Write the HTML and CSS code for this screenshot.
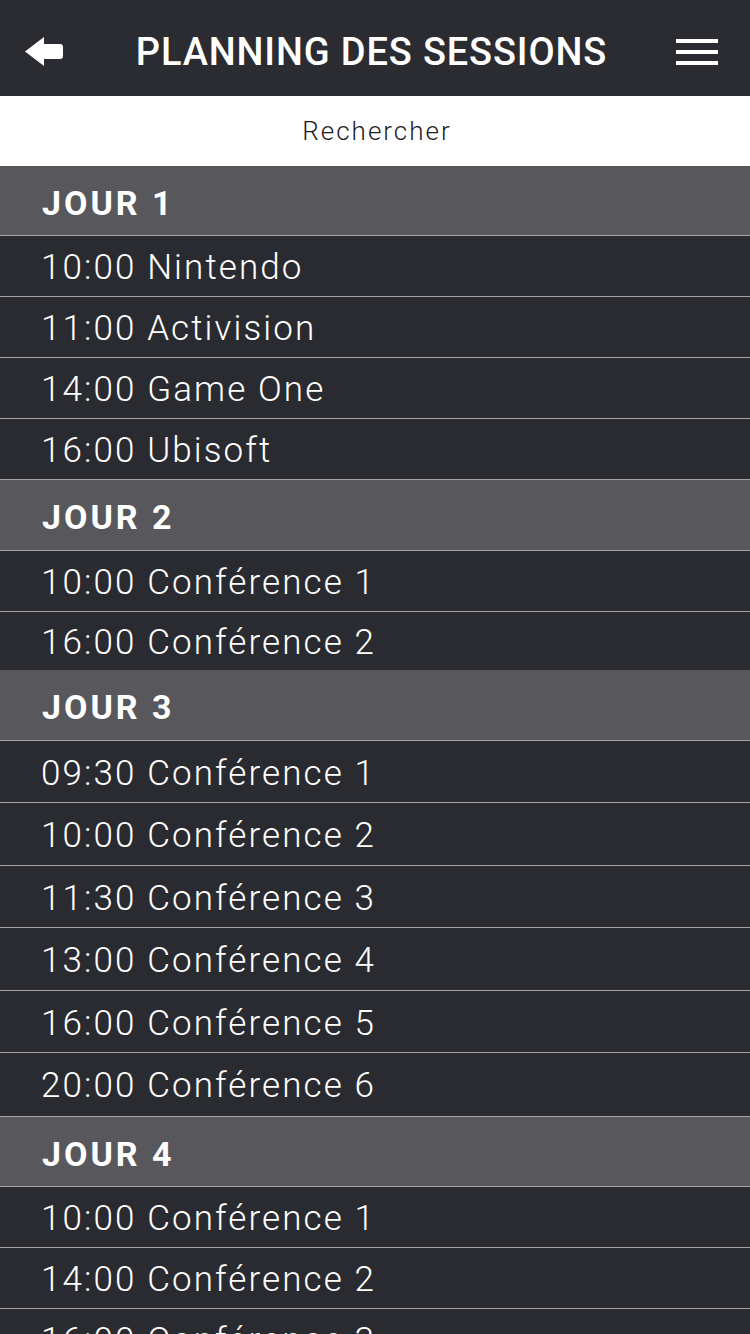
FILE: index.html
```html
<!DOCTYPE html>
<html lang="fr">
<head>
<meta charset="utf-8">
<title>Planning des sessions</title>
<link rel="stylesheet" href="styles.css">
</head>
<body>
<div class="app">
  <header class="topbar">
    <button class="icon-btn back" aria-label="Retour">
      <svg width="38" height="30" viewBox="0 0 38 30"><path d="M0 14.5 L19 0 L19 7 L35 7 Q38 7 38 10 L38 19 Q38 22 35 22 L19 22 L19 29 Z" fill="#fff"/></svg>
    </button>
    <h1 class="title">PLANNING DES SESSIONS</h1>
    <button class="icon-btn menu" aria-label="Menu">
      <span class="bar"></span><span class="bar"></span><span class="bar"></span>
    </button>
  </header>
  <div class="search">Rechercher</div>
  <section class="day day--first">
    <h2 class="day-title">JOUR 1</h2>
    <ul class="rows">
      <li class="row">10:00 Nintendo</li>
      <li class="row">11:00 Activision</li>
      <li class="row">14:00 Game One</li>
      <li class="row">16:00 Ubisoft</li>
    </ul>
  </section>
  <section class="day">
    <h2 class="day-title">JOUR 2</h2>
    <ul class="rows">
      <li class="row">10:00 Conférence 1</li>
      <li class="row row--end">16:00 Conférence 2</li>
    </ul>
  </section>
  <section class="day day--tall">
    <h2 class="day-title">JOUR 3</h2>
    <ul class="rows">
      <li class="row">09:30 Conférence 1</li>
      <li class="row">10:00 Conférence 2</li>
      <li class="row">11:30 Conférence 3</li>
      <li class="row">13:00 Conférence 4</li>
      <li class="row">16:00 Conférence 5</li>
      <li class="row">20:00 Conférence 6</li>
    </ul>
  </section>
  <section class="day day--first">
    <h2 class="day-title">JOUR 4</h2>
    <ul class="rows">
      <li class="row">10:00 Conférence 1</li>
      <li class="row">14:00 Conférence 2</li>
      <li class="row">16:00 Conférence 3</li>
    </ul>
  </section>
</div>
</body>
</html>
```
FILE: styles.css
```css
* { box-sizing: border-box; }
html, body { margin: 0; padding: 0; }
body {
  background: #2a2b30;
  font-family: Roboto, "Liberation Sans", sans-serif;
  color: #fff;
  overflow: hidden;
  height: 1334px;
}
.app { width: 750px; }
.topbar {
  height: 96px;
  background: #2b2c31;
  display: flex;
  align-items: center;
  justify-content: space-between;
  padding: 8px 32px 0 25px;
}
.icon-btn {
  background: none;
  border: 0;
  padding: 0;
  margin: 0;
  cursor: pointer;
}
.back { width: 38px; height: 30px; display: flex; }
.back svg { display: block; }
.title {
  margin: 0;
  font-size: 38px;
  font-weight: 500;
  letter-spacing: 0.85px;
  color: #fff;
  line-height: 1;
  padding-left: 4px;
}
.menu {
  width: 42px;
  display: flex;
  flex-direction: column;
  gap: 7px;
}
.menu .bar { display: block; height: 4px; background: #fff; }
.search {
  height: 70px;
  background: #fff;
  color: #1e1e1e;
  font-size: 26px;
  font-weight: 300;
  letter-spacing: 2px;
  display: flex;
  align-items: center;
  justify-content: center;
  padding-left: 4px;
}
.day-title {
  margin: 0;
  height: 71px;
  background: #58575c;
  border-bottom: 1px solid #a3a3a6;
  font-size: 34px;
  font-weight: 700;
  letter-spacing: 3px;
  display: flex;
  align-items: center;
  padding: 4px 0 0 42px;
}
.day--first .day-title { height: 70px; }
.rows { list-style: none; margin: 0; padding: 0; }
.row {
  height: 61px;
  border-bottom: 1px solid #a3a3a6;
  font-size: 35px;
  font-weight: 300;
  letter-spacing: 2.1px;
  display: flex;
  align-items: center;
  padding: 3px 0 0 41px;
  white-space: nowrap;
}
.row--end { height: 58px; border-bottom: 0; }
.day--tall .row { height: 62px; padding-top: 3px; }
.day--tall .row:nth-child(even) { height: 63px; }
.day--tall .row:last-child { height: 64px; padding-top: 1px; }
```
